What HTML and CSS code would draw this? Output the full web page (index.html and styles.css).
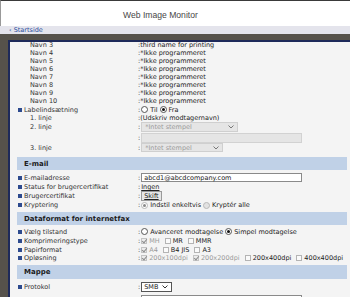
FILE: index.html
```html
<!DOCTYPE html>
<html lang="da">

<head>
    <meta charset="UTF-8">
    <meta name="viewport" content="width=device-width, initial-scale=1.0">
    <title>Web Image Monitor</title>
    <link rel="stylesheet" href="styles.css">
</head>

<body>
    <div class="top">
        <div class="title">Web Image Monitor</div>
    </div>
    <div class="nav"><a href="#">‹ Startside</a></div>

    <div class="frame">
        <div class="panel">
            <div class="content">
                <div class="row"><div class="lbl sub">Navn 3</div><div class="val">:third name for printing</div></div>
                <div class="row"><div class="lbl sub">Navn 4</div><div class="val">:*Ikke programmeret</div></div>
                <div class="row"><div class="lbl sub">Navn 5</div><div class="val">:*Ikke programmeret</div></div>
                <div class="row"><div class="lbl sub">Navn 6</div><div class="val">:*Ikke programmeret</div></div>
                <div class="row"><div class="lbl sub">Navn 7</div><div class="val">:*Ikke programmeret</div></div>
                <div class="row"><div class="lbl sub">Navn 8</div><div class="val">:*Ikke programmeret</div></div>
                <div class="row"><div class="lbl sub">Navn 9</div><div class="val">:*Ikke programmeret</div></div>
                <div class="row"><div class="lbl sub">Navn 10</div><div class="val">:*Ikke programmeret</div></div>
                <div class="row h9"><div class="lbl"><span class="sq"></span>Labelindsætning</div>
                    <div class="val">:<span class="rd"></span>Til<span class="rd on"></span>Fra</div></div>
                <div class="row"><div class="lbl sub">1. linje</div><div class="val">:(Udskriv modtagernavn)</div></div>
                <div class="row h10"><div class="lbl sub">2. linje</div>
                    <div class="val">:<span class="sel off w97">*Intet stempel<svg width="6" height="4" viewBox="0 0 6 4"><polyline points="0.5,0.5 3,3 5.5,0.5" /></svg></span></div></div>
                <div class="row h11"><div class="lbl"></div><div class="val">:<span class="inp off"></span></div></div>
                <div class="row h9"><div class="lbl sub">3. linje</div>
                    <div class="val">:<span class="sel off w82 h9">*Intet stempel<svg width="6" height="4" viewBox="0 0 6 4"><polyline points="0.5,0.5 3,3 5.5,0.5" /></svg></span></div></div>

                <div class="sec first">E-mail</div>
                <div class="row h11 after-sec"><div class="lbl"><span class="sq"></span>E-mailadresse</div>
                    <div class="val">:<span class="inp">abcd1@abcdcompany.com</span></div></div>
                <div class="row"><div class="lbl"><span class="sq"></span>Status for brugercertifikat</div>
                    <div class="val">:<span class="link">Ingen</span></div></div>
                <div class="row h10"><div class="lbl"><span class="sq"></span>Brugercertifikat</div>
                    <div class="val">:<span class="btn">Skift</span></div></div>
                <div class="row"><div class="lbl"><span class="sq"></span>Kryptering</div>
                    <div class="val">:<span class="rd on dis"></span>Indstil enkeltvis<span class="rd dis"></span>Kryptér alle</div></div>

                <div class="sec">Dataformat for internetfax</div>
                <div class="row h9 after-sec"><div class="lbl"><span class="sq"></span>Vælg tilstand</div>
                    <div class="val">:<span class="rd"></span>Avanceret modtagelse<span class="rd on"></span>Simpel modtagelse</div></div>
                <div class="row h9"><div class="lbl"><span class="sq"></span>Komprimeringstype</div>
                    <div class="val">:<span class="cb on"></span><span class="grey">MH</span><span class="cb"></span>MR<span class="cb"></span>MMR</div></div>
                <div class="row h9"><div class="lbl"><span class="sq"></span>Papirformat</div>
                    <div class="val">:<span class="cb on"></span><span class="grey">A4</span><span class="cb"></span>B4 JIS<span class="cb"></span>A3</div></div>
                <div class="row"><div class="lbl"><span class="sq"></span>Opløsning</div>
                    <div class="val">:<span class="cb on"></span><span class="grey">200x100dpi</span><span class="cb on"></span><span class="grey">200x200dpi</span><span class="cb"></span>200x400dpi<span class="cb"></span>400x400dpi</div></div>

                <div class="sec tall">Mappe</div>
                <div class="row h12 after-sec"><div class="lbl"><span class="sq"></span>Protokol</div>
                    <div class="val">:<span class="sel smb">SMB<svg width="6" height="4" viewBox="0 0 6 4"><polyline points="0.5,0.5 3,3 5.5,0.5" /></svg></span></div></div>
                <div class="row h12 top-al"><div class="lbl"><span class="sq"></span></div>
                    <div class="val"><span class="inp gap"></span></div></div>
            </div>
        </div>
    </div>
</body>

</html>
```

FILE: styles.css
```css
body {
    margin: 0;
    height: 297px;
    overflow: hidden;
    font-family: "DejaVu Sans", Verdana, sans-serif;
    font-size: 6.5px;
    color: #333;
    background: #56524b;
}

.top {
    height: 26px;
    box-sizing: border-box;
    background: #fff;
    border-top: 1px solid #3a3a3a;
    border-left: 1px solid #999;
}

.title {
    padding-top: 10px;
    padding-left: 122px;
    font-family: "Liberation Sans", Arial, sans-serif;
    font-size: 8.6px;
    line-height: 9px;
    color: #474747;
}

.nav {
    height: 8px;
    line-height: 8px;
    background: #e4e4ec;
    padding-left: 9px;
}

.nav a {
    color: #2b4c9c;
    text-decoration: none;
}

.frame {
    padding-top: 6px;
    padding-left: 8px;
}

.panel {
    height: 257px;
    overflow: hidden;
    background: #f4f4f4;
    border-top: 2px solid #1e2a5a;
    border-left: 2px solid #1e2a5a;
}

.content {
    margin-top: -1px;
    padding-left: 7px;
    padding-right: 3px;
}

.row {
    display: flex;
    align-items: center;
    height: 8px;
    white-space: nowrap;
}

.h9 { height: 9px; }
.h10 { height: 10px; }
.h11 { height: 11px; }
.h12 { height: 12px; }

.top-al {
    align-items: flex-start;
}

.top-al .lbl,
.top-al .val {
    padding-top: 2px;
}

.top-al .sq {
    margin-top: 2px;
}

.after-sec {
    margin-top: 2px;
}

.lbl {
    flex: none;
    width: 121px;
    display: flex;
    align-items: center;
    color: #333;
}

.lbl.sub {
    padding-left: 13px;
    box-sizing: border-box;
}

.sq {
    flex: none;
    width: 4px;
    height: 4px;
    margin-left: 1px;
    margin-right: 2px;
    background: #2d4a8e;
}

.val {
    display: flex;
    align-items: center;
    color: #222;
}

.grey {
    color: #9a9a9a;
}

.sec {
    height: 13px;
    margin-top: 3px;
    padding-left: 7px;
    display: flex;
    align-items: center;
    background: #c0d1e7;
    font-size: 7px;
    font-weight: bold;
    color: #1c1c1c;
}

.sec.first {
    margin-top: 5px;
}

.sec.tall {
    height: 14px;
}

/* radios and checkboxes */
.rd {
    flex: none;
    position: relative;
    width: 7px;
    height: 7px;
    box-sizing: border-box;
    margin: 0 2px 0 1px;
    border: 1px solid #555;
    border-radius: 50%;
    background: #fff;
}

.val > .rd:not(:first-child) {
    margin-left: 2px;
}

.rd.on::after {
    content: "";
    position: absolute;
    left: 1px;
    top: 1px;
    width: 3px;
    height: 3px;
    border-radius: 50%;
    background: #111;
}

.rd.dis {
    border-color: #b8b8b8;
    background: #e2e2e2;
}

.rd.on.dis {
    background: #fff;
}

.rd.on.dis::after {
    background: #8a8a8a;
}

.cb {
    flex: none;
    position: relative;
    width: 6px;
    height: 6px;
    box-sizing: border-box;
    margin: 0 2px 0 5px;
    border: 1px solid #b4b4b4;
    background: #fafafa;
}

.val > .cb:first-child {
    margin-left: 1px;
}

.cb.on {
    background: #ececec;
    border-color: #c4c4c4;
}

.cb.on::after {
    content: "";
    position: absolute;
    left: 1px;
    top: -1px;
    width: 2px;
    height: 4px;
    border-right: 1px solid #8c8c8c;
    border-bottom: 1px solid #8c8c8c;
    transform: rotate(40deg);
}

/* fields */
.sel {
    display: flex;
    align-items: center;
    justify-content: space-between;
    height: 10px;
    box-sizing: border-box;
    margin-left: 1px;
    padding: 0 3px 0 3px;
    border: 1px solid #555;
    background: #fff;
    color: #222;
}

.sel svg {
    fill: none;
    stroke: #333;
    stroke-width: 1;
}

.sel.off {
    border-color: #cfcfcf;
    background: #e5e5e5;
    color: #9a9a9a;
}

.sel.off svg {
    stroke: #777;
}

.w97 { width: 97px; }
.w82 { width: 82px; }
.sel.h9 { height: 9px; }

.sel.smb {
    width: 31px;
    padding-left: 2px;
}

.inp {
    display: flex;
    align-items: center;
    width: 161px;
    height: 9px;
    box-sizing: border-box;
    margin-left: 1px;
    padding-left: 2px;
    border: 1px solid #8a8a8a;
    background: #fff;
    color: #222;
}

.inp.gap {
    margin-left: 3px;
}

.inp.off {
    height: 10px;
    border-color: #d2d2d2;
    background: #e5e5e5;
}

.link {
    margin-left: 1px;
    text-decoration: underline;
}

.btn {
    margin-left: 1px;
    padding: 0 2px;
    line-height: 8px;
    border: 1px solid #9a9a9a;
    background: #e6e6e6;
    text-decoration: underline;
}
```
